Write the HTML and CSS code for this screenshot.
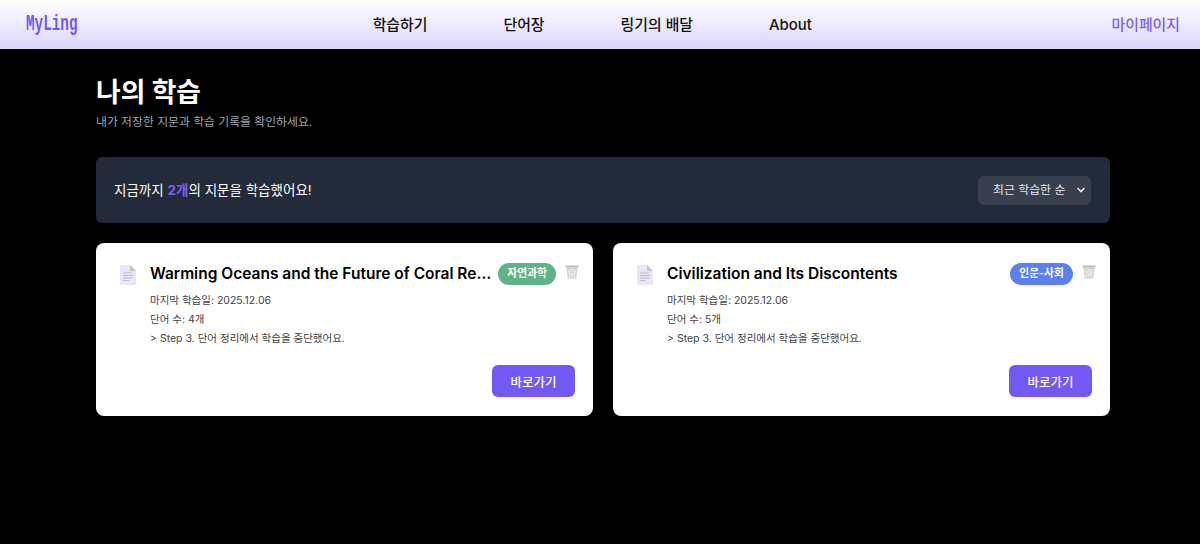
FILE: index.html
```html
<!DOCTYPE html>
<html lang="ko">
<head>
    <meta charset="UTF-8">
    <meta name="viewport" content="width=device-width, initial-scale=1.0">
    <title>나의 학습</title>
    <link rel="stylesheet" href="styles.css">
</head>
<body>

<header class="topbar">
    <a href="#" class="logo">MyLing</a>
    <nav class="menu">
        <a href="#">학습하기</a>
        <a href="#">단어장</a>
        <a href="#">링기의 배달</a>
        <a href="#">About</a>
    </nav>
    <a href="#" class="mypage">마이페이지</a>
</header>

<main class="container">
    <h1>나의 학습</h1>
    <p class="subtitle">내가 저장한 지문과 학습 기록을 확인하세요.</p>

    <section class="summary">
        <p>지금까지 <strong>2개</strong>의 지문을 학습했어요!</p>
        <div class="sort">
            <span>최근 학습한 순</span>
            <svg width="10" height="10" viewBox="0 0 10 10"><path d="M1.5 3 5 6.5 8.5 3" fill="none" stroke="#e5e7eb" stroke-width="1.6"/></svg>
        </div>
    </section>

    <section class="cards">
        <article class="card">
            <div class="card-head">
                <svg class="doc-icon" width="16" height="20" viewBox="0 0 16 20">
                    <path d="M0 0H10L16 6V20H0Z" fill="#ebe6f7"/>
                    <path d="M10 0 16 6H10Z" fill="#c4c4ce"/>
                    <path d="M3 8H12M3 10.5H13M3 13H13M3 15.5H9" stroke="#bcbcc6" stroke-width="1.2"/>
                </svg>
                <h2>Warming Oceans and the Future of Coral Reefs</h2>
                <span class="tag tag-green">자연과학</span>
                <svg class="trash-icon" width="14" height="14" viewBox="0 0 14 14">
                    <path d="M0.5 0.5H13.5V2.5H0.5Z" fill="#b8b8b8"/>
                    <path d="M1.5 2.5H12.5L11.3 13.5H2.7Z" fill="#d0d0d0"/>
                    <path d="M4 4 5 12.5M7 4V12.5M10 4 9 12.5M3 6 10.5 12.5M11 6 3.5 12.5M3 9.5 7 4M11 9.5 7 4" stroke="#f4f4f4" stroke-width="0.7" fill="none"/>
                </svg>
            </div>
            <div class="card-info">
                <p>마지막 학습일: 2025.12.06</p>
                <p>단어 수: 4개</p>
                <p>&gt; Step 3. 단어 정리에서 학습을 중단했어요.</p>
            </div>
            <div class="card-foot">
                <button type="button" class="btn">바로가기</button>
            </div>
        </article>

        <article class="card">
            <div class="card-head">
                <svg class="doc-icon" width="16" height="20" viewBox="0 0 16 20">
                    <path d="M0 0H10L16 6V20H0Z" fill="#ebe6f7"/>
                    <path d="M10 0 16 6H10Z" fill="#c4c4ce"/>
                    <path d="M3 8H12M3 10.5H13M3 13H13M3 15.5H9" stroke="#bcbcc6" stroke-width="1.2"/>
                </svg>
                <h2>Civilization and Its Discontents</h2>
                <span class="tag tag-blue">인문-사회</span>
                <svg class="trash-icon" width="14" height="14" viewBox="0 0 14 14">
                    <path d="M0.5 0.5H13.5V2.5H0.5Z" fill="#b8b8b8"/>
                    <path d="M1.5 2.5H12.5L11.3 13.5H2.7Z" fill="#d0d0d0"/>
                    <path d="M4 4 5 12.5M7 4V12.5M10 4 9 12.5M3 6 10.5 12.5M11 6 3.5 12.5M3 9.5 7 4M11 9.5 7 4" stroke="#f4f4f4" stroke-width="0.7" fill="none"/>
                </svg>
            </div>
            <div class="card-info">
                <p>마지막 학습일: 2025.12.06</p>
                <p>단어 수: 5개</p>
                <p>&gt; Step 3. 단어 정리에서 학습을 중단했어요.</p>
            </div>
            <div class="card-foot">
                <button type="button" class="btn">바로가기</button>
            </div>
        </article>
    </section>
</main>

</body>
</html>
```

FILE: styles.css
```css
* {
    box-sizing: border-box;
}
body {
    font-family: Inter, "Noto Sans CJK KR", sans-serif;
    background-color: #000;
    margin: 0;
    padding: 0;
}
a {
    text-decoration: none;
}
.topbar {
    height: 49px;
    padding: 0 20px 0 26px;
    display: flex;
    align-items: center;
    justify-content: space-between;
    background: linear-gradient(to bottom, #fff, #dcd4fb);
}
.logo {
    width: 47px;
    font-family: "Liberation Mono", monospace;
    font-size: 22px;
    line-height: 24px;
    font-weight: 700;
    white-space: nowrap;
    color: #7358f5;
    transform: scaleX(0.65);
    transform-origin: left center;
}
.menu {
    display: flex;
    gap: 76px;
}
.menu a {
    color: #111;
    font-size: 14.9px;
    line-height: 20px;
    font-weight: 500;
}
.mypage {
    color: #7c5ff5;
    font-size: 14.9px;
    line-height: 20px;
    font-weight: 500;
}
.container {
    width: 1014px;
    margin-left: 96px;
    padding-top: 25px;
}
h1 {
    margin: 0;
    color: #fff;
    font-size: 26.8px;
    line-height: 36px;
    font-weight: 700;
}
.subtitle {
    margin: 3px 0 0;
    color: #9ca3af;
    font-size: 11.85px;
    line-height: 18px;
}
.summary {
    margin-top: 26px;
    height: 66px;
    padding: 0 19px 0 18px;
    display: flex;
    align-items: center;
    justify-content: space-between;
    background-color: #232a39;
    border-radius: 6px;
    color: #fff;
    font-size: 13.5px;
    line-height: 20px;
    font-weight: 400;
}
.summary p {
    margin: 0;
}
.summary strong {
    color: #7c5ff5;
    font-weight: 700;
}
.sort {
    width: 113px;
    height: 29px;
    padding: 0 5px 0 15px;
    display: flex;
    align-items: center;
    justify-content: space-between;
    background-color: #383f4f;
    border-radius: 6px;
    color: #e5e7eb;
    font-size: 11.9px;
}
.cards {
    margin-top: 20px;
    display: grid;
    grid-template-columns: 1fr 1fr;
    gap: 20px;
}
.card {
    height: 173px;
    padding: 18px 18px 19px;
    background-color: #fff;
    border-radius: 8px;
    display: flex;
    flex-direction: column;
}
.card-head {
    display: flex;
    align-items: center;
    height: 25px;
}
.doc-icon {
    flex: none;
    margin: 3px 14px 0 6px;
}
.card-head h2 {
    flex: 1;
    min-width: 0;
    margin: 0;
    color: #000;
    font-size: 15.5px;
    font-weight: 600;
    white-space: nowrap;
    overflow: hidden;
    text-overflow: ellipsis;
}
.tag {
    flex: none;
    margin-left: 6px;
    padding: 0 9px;
    height: 22px;
    line-height: 22px;
    border-radius: 11px;
    color: #fff;
    font-size: 10.8px;
    font-weight: 600;
}
.tag-green {
    background-color: #5fb388;
}
.tag-blue {
    background-color: #5b7fee;
}
.trash-icon {
    flex: none;
    margin: -4px -4px 0 9px;
}
.card-info {
    margin-top: 5px;
    padding-left: 36px;
    color: #444;
    font-size: 10.5px;
    line-height: 19px;
}
.card-info p {
    margin: 0;
}
.card-foot {
    margin-top: auto;
    display: flex;
    justify-content: flex-end;
}
.btn {
    width: 83px;
    height: 32px;
    background-color: #7358f5;
    color: white;
    border: none;
    border-radius: 6px;
    font-family: inherit;
    font-size: 12.5px;
    font-weight: 500;
    cursor: pointer;
}
```
